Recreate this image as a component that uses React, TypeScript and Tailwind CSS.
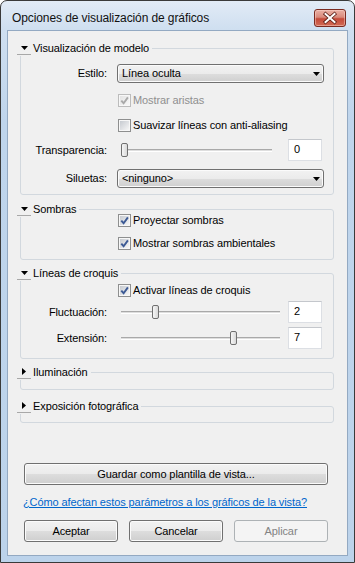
import React from 'react'

// Win7-style "Opciones de visualización de gráficos" dialog

const btnFace =
  'border border-[#707070] rounded-[3px] bg-[linear-gradient(#f2f2f2_0%,#ebebeb_50%,#dddddd_51%,#cfcfcf_100%)] shadow-[inset_0_0_0_1px_#fbfbfb]'

function Toggle({ open }: { open: boolean }) {
  return (
    <span className="w-[14px] h-[14px] flex items-center justify-center border-b border-[#a8a8a8]">
      {open ? (
        <svg width="7" height="4" viewBox="0 0 7 4">
          <path d="M0 0h7L3.5 4z" fill="#000" />
        </svg>
      ) : (
        <svg width="4" height="7" viewBox="0 0 4 7">
          <path d="M0 0l4 3.5L0 7z" fill="#000" />
        </svg>
      )}
    </span>
  )
}

function Group({
  title,
  open = true,
  className = '',
  children,
}: {
  title: string
  open?: boolean
  className?: string
  children?: React.ReactNode
}) {
  return (
    <fieldset className={`ml-[12px] w-[314px] border border-[#d2d8de] rounded-[3px] ${className}`}>
      <legend className="-ml-[4px] pr-[3px] h-[16px]">
        <span className="flex items-center h-[16px] gap-[2px]">
          <Toggle open={open} />
          <span>{title}</span>
        </span>
      </legend>
      {children}
    </fieldset>
  )
}

function Combo({ value }: { value: string }) {
  return (
    <div className={`ml-[10px] w-[207px] h-[19px] flex items-center pl-[4px] pr-[3px] ${btnFace}`}>
      <span className="flex-1">{value}</span>
      <svg width="7" height="4" viewBox="0 0 7 4">
        <path d="M0 0h7L3.5 4z" fill="#000" />
      </svg>
    </div>
  )
}

function Check({ checked = false, disabled = false }: { checked?: boolean; disabled?: boolean }) {
  return (
    <span
      className={`w-[13px] h-[13px] shrink-0 flex border bg-[#f7f7f7] p-[1px] ${
        disabled ? 'border-[#bcbcbc]' : 'border-[#8e8f8f]'
      }`}
    >
      <span
        className={`flex-1 flex items-center justify-center ${
          disabled
            ? 'bg-[linear-gradient(135deg,#e3e3e3,#f7f7f7)]'
            : 'bg-[linear-gradient(135deg,#c6cad0,#f6f6f6)]'
        }`}
      >
        {checked && (
          <svg width="9" height="9" viewBox="0 0 9 9" className="overflow-visible">
            <path
              d="M1.3 4.6L3.6 7.2L7.9 1.4"
              fill="none"
              stroke={disabled ? '#a9a9a9' : '#3c5a95'}
              strokeWidth="1.9"
            />
          </svg>
        )}
      </span>
    </span>
  )
}

function CheckRow({
  label,
  checked,
  disabled,
  className = '',
}: {
  label: string
  checked?: boolean
  disabled?: boolean
  className?: string
}) {
  return (
    <div className={`flex items-center h-[20px] pl-[97px] ${className}`}>
      <Check checked={checked} disabled={disabled} />
      <span className={`ml-[2px] ${disabled ? 'text-[#8f8f8f]' : ''}`}>{label}</span>
    </div>
  )
}

function Slider({ pos, className = '' }: { pos: number; className?: string }) {
  return (
    <div className={`relative h-[22px] flex items-center ${className}`}>
      <div className="flex-1 mx-[2px] h-[3px] border-t border-[#a9a9a9] border-b border-b-white bg-[#dedede]" />
      <div
        className="absolute top-1/2 -translate-y-1/2 w-[7px] h-[14px] rounded-[2px] border border-[#707070] bg-[linear-gradient(90deg,#f6f6f6,#d9d9d9)]"
        style={{ left: pos }}
      />
    </div>
  )
}

function NumBox({ value }: { value: string }) {
  return (
    <div className="w-[34px] h-[22px] shrink-0 border border-[#dcdfe4] border-t-[#c4c7cc] bg-white flex items-center pl-[5px] pb-[2px]">
      {value}
    </div>
  )
}

function Label({ children }: { children: React.ReactNode }) {
  return <span className="w-[86px] shrink-0 text-right">{children}</span>
}

function Button({
  children,
  disabled = false,
  className = '',
}: {
  children: React.ReactNode
  disabled?: boolean
  className?: string
}) {
  return (
    <div
      className={`h-[22px] flex items-center justify-center ${
        disabled
          ? 'border border-[#adb2b5] rounded-[3px] bg-[#f4f4f4] text-[#838383]'
          : btnFace
      } ${className}`}
    >
      {children}
    </div>
  )
}

export default function App() {
  return (
    <div className="w-[355px] h-[563px] flex flex-col border border-[#3a3a3a] rounded-t-[7px] overflow-hidden bg-[linear-gradient(#e2ebf6_0px,#cfdff0_28px,#bfd5ec_120px,#bcd3eb_100%)] font-['Liberation_Sans',Arial,sans-serif] text-[11px] tracking-[-0.1px] text-black">
      {/* title bar */}
      <div className="h-[29px] shrink-0 flex items-start">
        <span className="flex-1 pl-[11px] pt-[9px] text-[12px] tracking-[-0.1px] text-[#111] leading-[16px]">
          Opciones de visualización de gráficos
        </span>
        <div className="mt-[8px] mr-[8px] w-[32px] h-[18px] rounded-[3px] border border-[#7a2a20] bg-[linear-gradient(#eab0a4_0%,#d98a7c_45%,#c44a39_55%,#d26b55_100%)] shadow-[inset_0_0_0_1px_rgba(255,220,210,0.45)] flex items-center justify-center">
          <svg width="12" height="10" viewBox="0 0 12 10" className="overflow-visible">
            <path d="M1.5 1L10.5 9M10.5 1L1.5 9" stroke="#5a1d14" strokeWidth="3.6" strokeLinecap="square" />
            <path d="M1.5 1L10.5 9M10.5 1L1.5 9" stroke="#fff" strokeWidth="2" strokeLinecap="square" />
          </svg>
        </div>
      </div>

      {/* client area */}
      <div className="flex-1 mx-[6px] mb-[6px] border border-[#93a9c2] bg-[#f0f0f0] flex flex-col pt-[9px]">
        <Group title="Visualización de modelo" className="pb-[6px]">
          <div className="flex items-center h-[19px] mt-[8px]">
            <Label>Estilo:</Label>
            <Combo value="Línea oculta" />
          </div>
          <CheckRow label="Mostrar aristas" checked disabled className="mt-[7px]" />
          <CheckRow label="Suavizar líneas con anti-aliasing" className="mt-[5px]" />
          <div className="flex items-center h-[22px] mt-[4px]">
            <Label>Transparencia:</Label>
            <Slider pos={2} className="ml-[12px] flex-1 mr-[14px]" />
            <NumBox value="0" />
            <span className="w-[11px] shrink-0" />
          </div>
          <div className="flex items-center h-[19px] mt-[8px]">
            <Label>Siluetas:</Label>
            <Combo value={'<ninguno>'} />
          </div>
        </Group>

        <Group title="Sombras" className="mt-[6px] pb-[6px]">
          <CheckRow label="Proyectar sombras" checked className="-mt-[7px]" />
          <CheckRow label="Mostrar sombras ambientales" checked className="mt-[3px]" />
        </Group>

        <Group title="Líneas de croquis" className="mt-[5px] pb-[9px]">
          <CheckRow label="Activar líneas de croquis" checked className="-mt-[1px]" />
          <div className="flex items-center h-[22px] mt-[1px]">
            <Label>Fluctuación:</Label>
            <Slider pos={33} className="ml-[12px] flex-1 mr-[6px]" />
            <NumBox value="2" />
            <span className="w-[11px] shrink-0" />
          </div>
          <div className="flex items-center h-[22px] mt-[4px]">
            <Label>Extensión:</Label>
            <Slider pos={111} className="ml-[12px] flex-1 mr-[6px]" />
            <NumBox value="7" />
            <span className="w-[11px] shrink-0" />
          </div>
        </Group>

        <Group title="Iluminación" open={false} className="mt-[5px] pb-[9px]" />
        <Group title="Exposición fotográfica" open={false} className="mt-[8px] pb-[8px]" />

        <div className="flex-1" />

        <div className="pl-[16px] pb-[13px]">
          <Button className="w-[304px]">Guardar como plantilla de vista...</Button>
          <div className="mt-[9px] h-[16px] -ml-[1px] flex items-center">
            <span className="text-[#0066cc] underline">¿Cómo afectan estos parámetros a los gráficos de la vista?</span>
          </div>
          <div className="mt-[10px] flex gap-[11px]">
            <Button className="w-[94px]">Aceptar</Button>
            <Button className="w-[94px]">Cancelar</Button>
            <Button disabled className="w-[94px]">
              Aplicar
            </Button>
          </div>
        </div>
      </div>
    </div>
  )
}
